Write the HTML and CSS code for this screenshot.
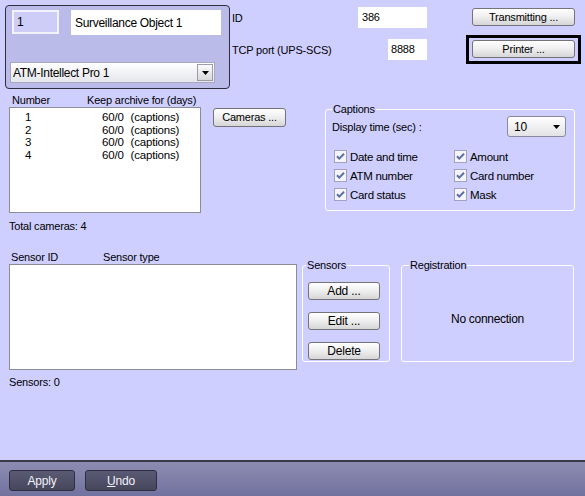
FILE: index.html
```html
<!DOCTYPE html>
<html>
<head>
<meta charset="utf-8">
<link rel="stylesheet" href="styles.css">
</head>
<body>
<div class="page">
  <div class="main">
    <div class="top">
      <div class="objbox">
        <div class="objrow">
          <div class="field num">1</div>
          <div class="field name">Surveillance Object 1</div>
        </div>
        <div class="combo wide">
          <span class="combo-text">ATM-Intellect Pro 1</span>
          <span class="drop"><svg width="7" height="4" viewBox="0 0 7 4"><path d="M0 0H7L3.5 4Z" fill="#000"/></svg></span>
        </div>
      </div>
      <div class="mid">
        <div class="mrow r1"><span>ID</span><div class="field idf">386</div></div>
        <div class="mrow r2"><span>TCP port (UPS-SCS)</span><div class="field portf">8888</div></div>
      </div>
      <div class="right">
        <div class="btn tbtn">Transmitting ...</div>
        <div class="frame"><div class="btn tbtn">Printer ...</div></div>
      </div>
    </div>

    <div class="sec2">
      <div class="lcol lc2">
        <div class="hdr"><span class="h-num">Number</span><span>Keep archive for (days)</span></div>
        <div class="list cams">
          <div class="lrow"><span class="c-num">1</span><span class="c-val">60/0<span class="cap">(captions)</span></span></div>
          <div class="lrow"><span class="c-num">2</span><span class="c-val">60/0<span class="cap">(captions)</span></span></div>
          <div class="lrow"><span class="c-num">3</span><span class="c-val">60/0<span class="cap">(captions)</span></span></div>
          <div class="lrow"><span class="c-num">4</span><span class="c-val">60/0<span class="cap">(captions)</span></span></div>
        </div>
        <div class="note">Total cameras: 4</div>
      </div>
      <div class="btn cbtn">Cameras ...</div>
      <fieldset class="grp captions">
        <legend>Captions</legend>
        <div class="disp">
          <span>Display time (sec) :</span>
          <div class="combo small">
            <span>10</span>
            <svg width="7" height="4" viewBox="0 0 7 4"><path d="M0 0H7L3.5 4Z" fill="#000"/></svg>
          </div>
        </div>
        <div class="checks">
          <label class="chk"><span class="box"><svg width="13" height="13" viewBox="0 0 13 13"><rect x="0.5" y="0.5" width="12" height="12" fill="#f4f4fa" stroke="#a2a2c0"/><path d="M3 6.2L5.3 8.6L10 3.8" stroke="#5d70a6" stroke-width="2" fill="none"/></svg></span>Date and time</label>
          <label class="chk"><span class="box"><svg width="13" height="13" viewBox="0 0 13 13"><rect x="0.5" y="0.5" width="12" height="12" fill="#f4f4fa" stroke="#a2a2c0"/><path d="M3 6.2L5.3 8.6L10 3.8" stroke="#5d70a6" stroke-width="2" fill="none"/></svg></span>Amount</label>
          <label class="chk"><span class="box"><svg width="13" height="13" viewBox="0 0 13 13"><rect x="0.5" y="0.5" width="12" height="12" fill="#f4f4fa" stroke="#a2a2c0"/><path d="M3 6.2L5.3 8.6L10 3.8" stroke="#5d70a6" stroke-width="2" fill="none"/></svg></span>ATM number</label>
          <label class="chk"><span class="box"><svg width="13" height="13" viewBox="0 0 13 13"><rect x="0.5" y="0.5" width="12" height="12" fill="#f4f4fa" stroke="#a2a2c0"/><path d="M3 6.2L5.3 8.6L10 3.8" stroke="#5d70a6" stroke-width="2" fill="none"/></svg></span>Card number</label>
          <label class="chk"><span class="box"><svg width="13" height="13" viewBox="0 0 13 13"><rect x="0.5" y="0.5" width="12" height="12" fill="#f4f4fa" stroke="#a2a2c0"/><path d="M3 6.2L5.3 8.6L10 3.8" stroke="#5d70a6" stroke-width="2" fill="none"/></svg></span>Card status</label>
          <label class="chk"><span class="box"><svg width="13" height="13" viewBox="0 0 13 13"><rect x="0.5" y="0.5" width="12" height="12" fill="#f4f4fa" stroke="#a2a2c0"/><path d="M3 6.2L5.3 8.6L10 3.8" stroke="#5d70a6" stroke-width="2" fill="none"/></svg></span>Mask</label>
        </div>
      </fieldset>
    </div>

    <div class="sec3">
      <div class="lcol lc3">
        <div class="hdr"><span class="h-sid">Sensor ID</span><span>Sensor type</span></div>
        <div class="list sensors"></div>
        <div class="note s-note">Sensors: 0</div>
      </div>
      <fieldset class="grp sgrp">
        <legend>Sensors</legend>
        <div class="btn sbtn first">Add ...</div>
        <div class="btn sbtn">Edit ...</div>
        <div class="btn sbtn">Delete</div>
      </fieldset>
      <fieldset class="grp reg">
        <legend>Registration</legend>
        <div class="noconn">No connection</div>
      </fieldset>
    </div>
  </div>

  <div class="footer">
    <div class="fbtn apply">Apply</div>
    <div class="fbtn undo"><u>U</u>ndo</div>
  </div>
</div>
</body>
</html>
```

FILE: styles.css
```css
* { box-sizing: border-box; }
html, body { margin: 0; padding: 0; }
body {
  width: 585px;
  height: 496px;
  overflow: hidden;
  font-family: "Liberation Sans", Arial, sans-serif;
  font-size: 11px;
  letter-spacing: -0.2px;
  color: #000;
  background: #cfcfff;
  white-space: nowrap;
}
.page { display: flex; flex-direction: column; height: 496px; }
.main { height: 460px; }

/* top */
.top { display: flex; padding: 5px 0 0 5px; height: 89px; }
.objbox {
  width: 225px; height: 84px;
  border: 1px solid #2e2e3c;
  border-radius: 4px;
  background: #bbbbea;
}
.objrow { display: flex; margin: 4px 0 0 6px; }
.field { background: #fff; line-height: 1; display: flex; align-items: center; padding-left: 4px; }
.field.num {
  width: 47px; height: 24px;
  background: #cdcdf8;
  border: 2px solid #f2f2ff;
  padding-left: 3px;
  font-size: 12px;
}
.field.name { width: 150px; height: 25px; margin-left: 12px; padding-left: 4px; font-size: 12px; letter-spacing: -0.3px; }
.combo.wide {
  margin: 27px 0 0 4px;
  width: 205px; height: 21px;
  border: 1px solid #a8a8c0;
  background: linear-gradient(#ffffff, #e4e6ea);
  display: flex; align-items: center; justify-content: space-between;
  padding-left: 2px;
  font-size: 12px;
  letter-spacing: -0.3px;
}
.drop {
  width: 16px; height: 17px;
  margin-right: 1px;
  border: 1px solid #9c9cac;
  background: linear-gradient(#fbfbfb, #d8d8dc);
  display: flex; align-items: center; justify-content: center;
}

.mid { width: 196px; margin-left: 1px; padding-left: 1px; }
.mrow { display: flex; justify-content: space-between; align-items: center; height: 21px; }
.mrow.r1 { margin-top: 2px; }
.mrow.r2 { margin-top: 11px; }
.field.idf { width: 69px; height: 21px; }
.field.portf { width: 39px; height: 21px; padding-left: 3px; }

.right { margin-left: 39px; }
.btn {
  height: 18px;
  border: 1px solid #747478;
  border-radius: 3px;
  background: linear-gradient(#ffffff 0%, #f0f0f0 45%, #d6d6d8 100%);
  display: flex; align-items: center; justify-content: center;
  line-height: 1;
}
.tbtn { width: 103px; }
.right > .tbtn { margin: 3px 0 0 6px; }
.frame {
  margin-top: 9px;
  width: 115px; height: 29px;
  border: 3px solid #000;
  padding: 2px 3px;
}

/* section 2 */
.sec2 { display: flex; align-items: flex-start; margin-top: 5px; }
.lcol { margin-left: 9px; }
.lc2 { width: 192px; }
.lc3 { width: 288px; }
.hdr { height: 13px; line-height: 13px; display: flex; }
.h-num { margin-left: 3px; width: 75px; }
.list { background: #fff; border: 1px solid #8c8c94; }
.list.cams { width: 192px; height: 106px; padding-top: 3px; font-size: 11.5px; }
.lrow { display: flex; height: 12.5px; line-height: 12.5px; }
.c-num { width: 92px; padding-left: 15px; }
.cap { margin-left: 7px; }
.note { height: 13px; line-height: 13px; margin-top: 7px; }
.cbtn { width: 73px; height: 19px; margin: 14px 0 0 12px; }

.grp {
  margin: 0; padding: 0;
  border: 1px solid #fff;
  border-radius: 3px;
  min-width: 0;
}
.grp legend { padding: 0 1px; line-height: 14px; height: 14px; }
.captions { width: 250px; margin: 8px 0 0 39px; padding: 0 8px 6px 6px; }
.disp { display: flex; justify-content: space-between; align-items: center; height: 21px; }
.combo.small {
  width: 59px; height: 21px;
  border: 1px solid #8a8a98;
  border-radius: 3px;
  background: linear-gradient(#ffffff, #e2e2e6);
  display: flex; align-items: center; justify-content: space-between;
  padding: 0 5px 0 6px;
  font-size: 12px;
}
.checks {
  display: grid;
  grid-template-columns: 120px 1fr;
  grid-auto-rows: 19px;
  margin: 10px 0 0 2px;
  font-size: 11.5px;
  letter-spacing: -0.3px;
}
.chk { display: flex; align-items: center; }
.box { width: 13px; height: 13px; margin-right: 3px; display: flex; }

/* section 3 */
.sec3 { display: flex; align-items: flex-start; margin-top: 18px; }
.h-sid { margin-left: 2px; width: 92px; }
.list.sensors { width: 288px; height: 106px; }
.s-note { margin-top: 6px; }
.sgrp { width: 88px; height: 104px; margin: 7px 0 0 5px; padding: 0 0 0 5px; }
.sgrp legend { margin-left: -2px; }
.sbtn { width: 72px; margin-top: 12px; font-size: 12px; }
.sbtn.first { margin-top: 10px; }
.reg { width: 173px; height: 104px; margin: 7px 0 0 11px; padding: 0 0 0 7px; }
.noconn { text-align: center; margin: 40px 0 0 -7px; line-height: 14px; font-size: 12px; letter-spacing: -0.3px; }

/* footer */
.footer {
  height: 36px;
  border-top: 2px solid #3a3a48;
  background: linear-gradient(#8c8cb2, #7272a0);
  display: flex;
  padding: 8px 0 0 9px;
  align-items: flex-start;
}
.fbtn {
  height: 21px;
  border: 1px solid #2e2e40;
  border-radius: 3px;
  background: linear-gradient(#5a5a74, #46465c);
  color: #f2f2fa;
  display: flex; align-items: center; justify-content: center;
  line-height: 1;
  font-size: 12px;
}
.apply { width: 66px; }
.undo { width: 72px; margin-left: 10px; }
.undo u { text-decoration: underline; }
```
